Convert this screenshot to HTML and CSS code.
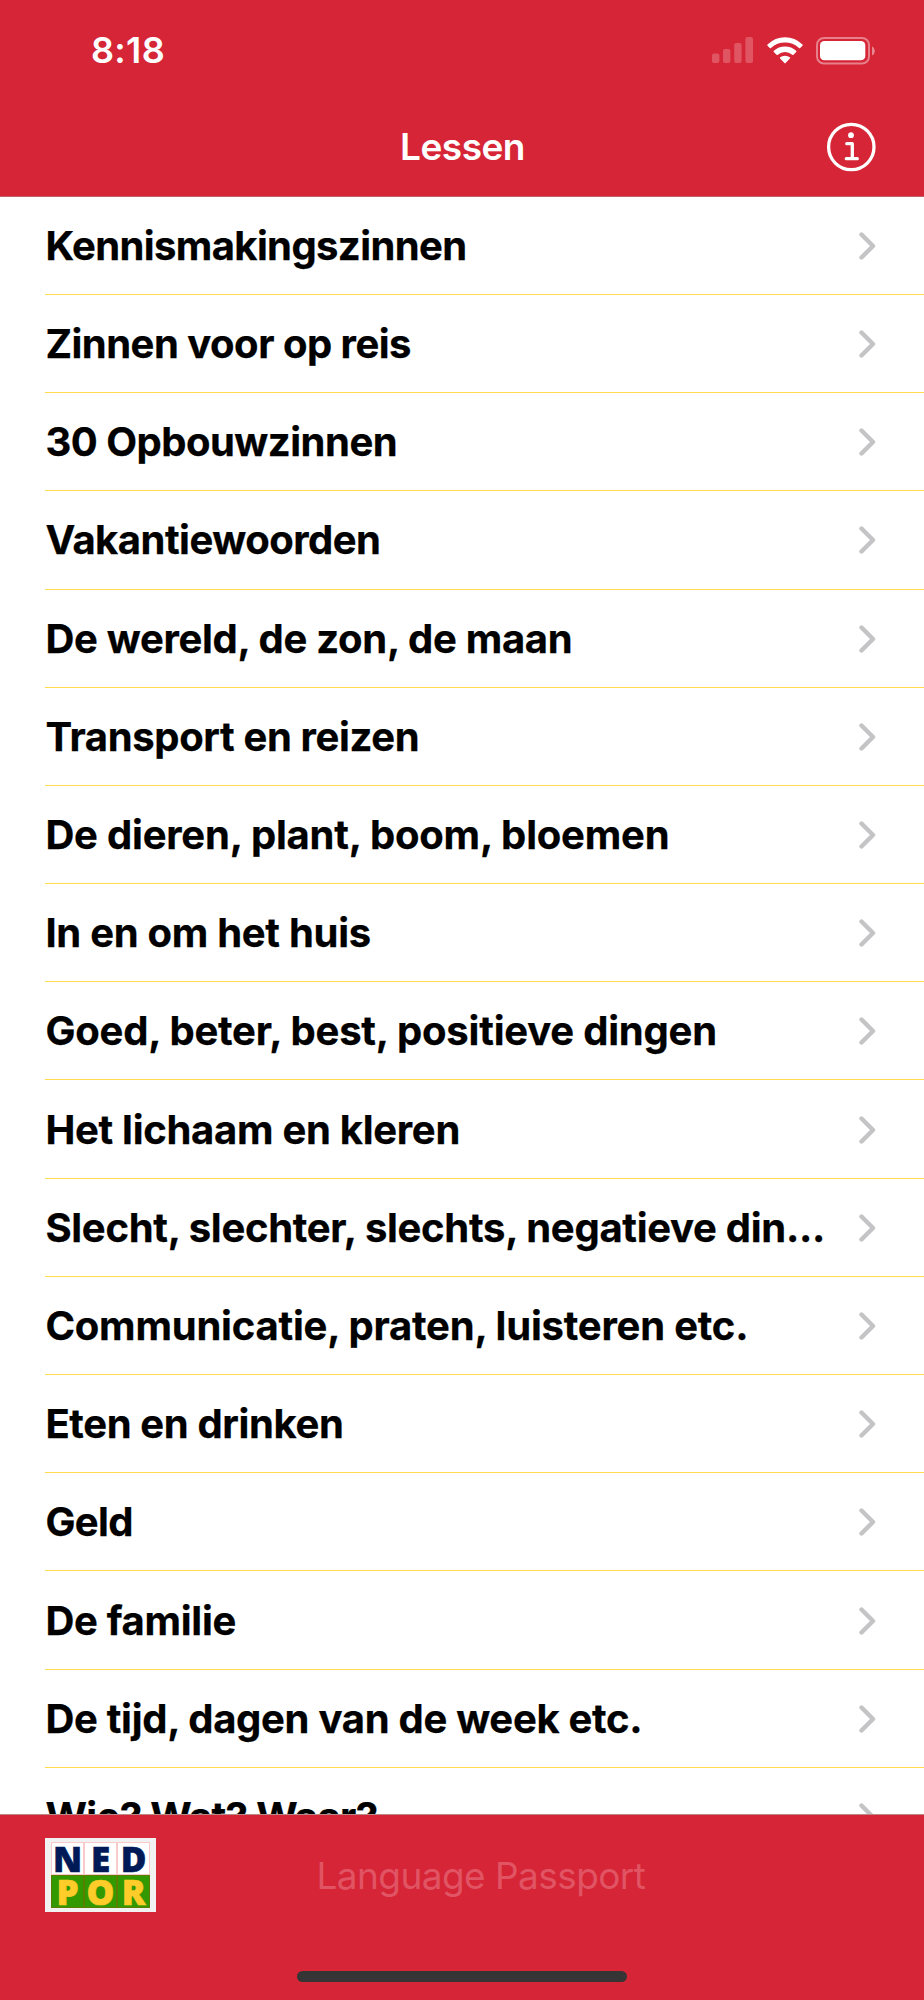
FILE: index.html
```html
<!DOCTYPE html>
<html lang="nl">
<head>
<meta charset="utf-8">
<title>Lessen</title>
<link rel="stylesheet" href="styles.css">
</head>
<body>
<div class="screen">
  <header class="top">
    <div class="status">
      <span class="time">8:18</span>
      <svg class="signal" width="41" height="26" viewBox="0 0 41 26"><rect x="0" y="16.5" width="7.4" height="9.5" rx="2"/><rect x="11" y="12" width="7.4" height="14" rx="2"/><rect x="22.2" y="6" width="7.4" height="20" rx="2"/><rect x="33.4" y="0" width="7.6" height="26" rx="2"/></svg>
      <svg class="wifi" width="36" height="27" viewBox="0 0 36 27"><path d="M.5 7.6Q8 .3 18 .3T35.500 7.600Q36 8.200 35.500 8.700L33.200 11Q32.600 11.500 32 11Q26 5.600 18 5.600T4 11Q3.400 11.500 2.800 11L.5 8.700Q0 8.200 .5 7.600Z"/><path d="M6.800 13.800Q11.500 9.500 18 9.500T29.200 13.800Q29.800 14.400 29.200 15L26.500 17.700Q25.900 18.200 25.200 17.700Q22 14.900 18 14.900T10.800 17.700Q10.100 18.200 9.500 17.700L6.800 15Q6.200 14.400 6.800 13.800Z"/><path d="M13.200 20.300Q15.200 18.800 18 18.800T22.800 20.300Q23.500 20.900 22.900 21.500L18.600 26.100Q18 26.700 17.400 26.100L13.100 21.500Q12.500 20.900 13.200 20.300Z"/></svg>
      <svg class="battery" width="60" height="28" viewBox="0 0 60 28"><rect class="shell" x="1" y="1" width="52" height="25.500" rx="7"/><rect x="4" y="4" width="45.300" height="19.300" rx="4.300"/><path class="cap" d="M56 9.300Q58.900 11 58.900 13.900T56 18.500Z"/></svg>
    </div>
    <div class="nav">
      <h1 class="title">Lessen</h1>
      <svg class="info" width="50" height="50" viewBox="0 0 50 50"><circle cx="25.300" cy="25" r="22.700"/><circle class="dot" cx="25" cy="13.200" r="2.900"/><path d="M20.800 21.700H26.300V36.500M20.300 36.700H31.300"/></svg>
    </div>
  </header>
  <ul class="list">
    <li class="row"><span class="label t6">Kennismakingszinnen</span><svg class="chevron" viewBox="0 0 17 28"><path d="M2.500 2.500L14 14L2.500 25.500"/></svg></li>
    <li class="row"><span class="label t5">Zinnen voor op reis</span><svg class="chevron" viewBox="0 0 17 28"><path d="M2.500 2.500L14 14L2.500 25.500"/></svg></li>
    <li class="row"><span class="label t5">30 Opbouwzinnen</span><svg class="chevron" viewBox="0 0 17 28"><path d="M2.500 2.500L14 14L2.500 25.500"/></svg></li>
    <li class="row"><span class="label t5">Vakantiewoorden</span><svg class="chevron" viewBox="0 0 17 28"><path d="M2.500 2.500L14 14L2.500 25.500"/></svg></li>
    <li class="row"><span class="label t3">De wereld, de zon, de maan</span><svg class="chevron" viewBox="0 0 17 28"><path d="M2.500 2.500L14 14L2.500 25.500"/></svg></li>
    <li class="row"><span class="label t4">Transport en reizen</span><svg class="chevron" viewBox="0 0 17 28"><path d="M2.500 2.500L14 14L2.500 25.500"/></svg></li>
    <li class="row"><span class="label t2">De dieren, plant, boom, bloemen</span><svg class="chevron" viewBox="0 0 17 28"><path d="M2.500 2.500L14 14L2.500 25.500"/></svg></li>
    <li class="row"><span class="label t3">In en om het huis</span><svg class="chevron" viewBox="0 0 17 28"><path d="M2.500 2.500L14 14L2.500 25.500"/></svg></li>
    <li class="row"><span class="label t2">Goed, beter, best, positieve dingen</span><svg class="chevron" viewBox="0 0 17 28"><path d="M2.500 2.500L14 14L2.500 25.500"/></svg></li>
    <li class="row"><span class="label t3">Het lichaam en kleren</span><svg class="chevron" viewBox="0 0 17 28"><path d="M2.500 2.500L14 14L2.500 25.500"/></svg></li>
    <li class="row"><span class="label t3">Slecht, slechter, slechts, negatieve din...</span><svg class="chevron" viewBox="0 0 17 28"><path d="M2.500 2.500L14 14L2.500 25.500"/></svg></li>
    <li class="row"><span class="label t2">Communicatie, praten, luisteren etc.</span><svg class="chevron" viewBox="0 0 17 28"><path d="M2.500 2.500L14 14L2.500 25.500"/></svg></li>
    <li class="row"><span class="label t4">Eten en drinken</span><svg class="chevron" viewBox="0 0 17 28"><path d="M2.500 2.500L14 14L2.500 25.500"/></svg></li>
    <li class="row"><span class="label t6">Geld</span><svg class="chevron" viewBox="0 0 17 28"><path d="M2.500 2.500L14 14L2.500 25.500"/></svg></li>
    <li class="row"><span class="label t3">De familie</span><svg class="chevron" viewBox="0 0 17 28"><path d="M2.500 2.500L14 14L2.500 25.500"/></svg></li>
    <li class="row"><span class="label t3">De tijd, dagen van de week etc.</span><svg class="chevron" viewBox="0 0 17 28"><path d="M2.500 2.500L14 14L2.500 25.500"/></svg></li>
    <li class="row"><span class="label t6">Wie? Wat? Waar?</span><svg class="chevron" viewBox="0 0 17 28"><path d="M2.500 2.500L14 14L2.500 25.500"/></svg></li>
  </ul>
  <footer class="bottom">
    <div class="toolbar">
      <div class="logo"><div class="tiles"><span>N</span><span>E</span><span>D</span><span class="g">P</span><span class="g">O</span><span class="g">R</span></div></div>
      <span class="passport">Language Passport</span>
    </div>
    <div class="home"></div>
  </footer>
</div>
</body>
</html>
```
FILE: styles.css
```css
* { box-sizing: border-box; margin: 0; padding: 0; }
body { width: 924px; height: 2000px; overflow: hidden; background: #fff; font-family: Inter, "Liberation Sans", sans-serif; }
.screen { display: flex; flex-direction: column; height: 2000px; }
.top { flex: none; height: 196.8px; background: #d62536; border-bottom: 1px solid #c0606a; color: #fff; }
.status { display: flex; align-items: flex-start; height: 98px; padding: 37px 48px 0 91px; }
.time { flex: 1; font-size: 36px; font-weight: 600; line-height: 27px; letter-spacing: .3px; }
.status svg { flex: none; fill: #fff; }
.signal { opacity: .22; }
.wifi { margin-left: 14px; }
.battery { margin-left: 13px; }
.battery .shell { fill: none; stroke: #fff; stroke-width: 2; opacity: .42; }
.battery .cap { opacity: .45; }
.nav { display: grid; grid-template-columns: 1fr auto 1fr; align-items: center; height: 98px; padding: 0 48px; }
.title { grid-column: 2; padding-left: 1px; font-size: 37px; font-weight: 600; line-height: 48px; letter-spacing: -0.5px; }
.info { justify-self: end; fill: none; stroke: #fff; stroke-width: 3.3; stroke-linecap: round; stroke-linejoin: round; }
.info .dot { fill: #fff; stroke: none; }
.list { flex: 1; min-height: 0; overflow: hidden; list-style: none; }
.row { display: flex; align-items: center; justify-content: space-between; height: 98.2px; margin-left: 45px; padding-right: 48.5px; border-bottom: 1px solid #ffdc4a; }
.label { padding: 1px 0 0 .4px; font-size: 40px; font-weight: 700; line-height: 48px; white-space: nowrap; color: #000; -webkit-text-stroke: .25px #000; }
.t2 { letter-spacing: -.2px; }
.t3 { letter-spacing: -.28px; }
.t4 { letter-spacing: -.36px; }
.t5 { letter-spacing: -.5px; }
.t6 { letter-spacing: -.61px; }
.chevron { flex: none; width: 17px; height: 28px; margin-top: 1px; fill: none; stroke: #c4c4c6; stroke-width: 4.4; stroke-linecap: round; stroke-linejoin: round; }
.bottom { flex: none; height: 186px; background: #d62536; border-top: 1px solid #b88; }
.toolbar { display: flex; height: 156px; padding: 23px 45px 0; }
.logo { flex: none; width: 111px; height: 74px; padding: 4px 6px; background: #f1f1f1; }
.tiles { display: grid; grid-template-columns: repeat(3, 33px); grid-template-rows: 33px 33px; }
.tiles span { border: 1px solid #f9caca; background: #fff; color: #001a57; font: 800 35px/32px "Open Sans", sans-serif; -webkit-text-stroke: .6px currentColor; text-align: center; }
.tiles .g { background: #339900; color: #ffcc29; border-color: #5c7e00; }
.passport { margin-left: 160.500px; font-size: 37px; line-height: 75px; letter-spacing: -.57px; color: #e05464; }
.home { width: 330px; height: 11px; margin: 0 auto; border-radius: 6px; background: #353535; }
```
